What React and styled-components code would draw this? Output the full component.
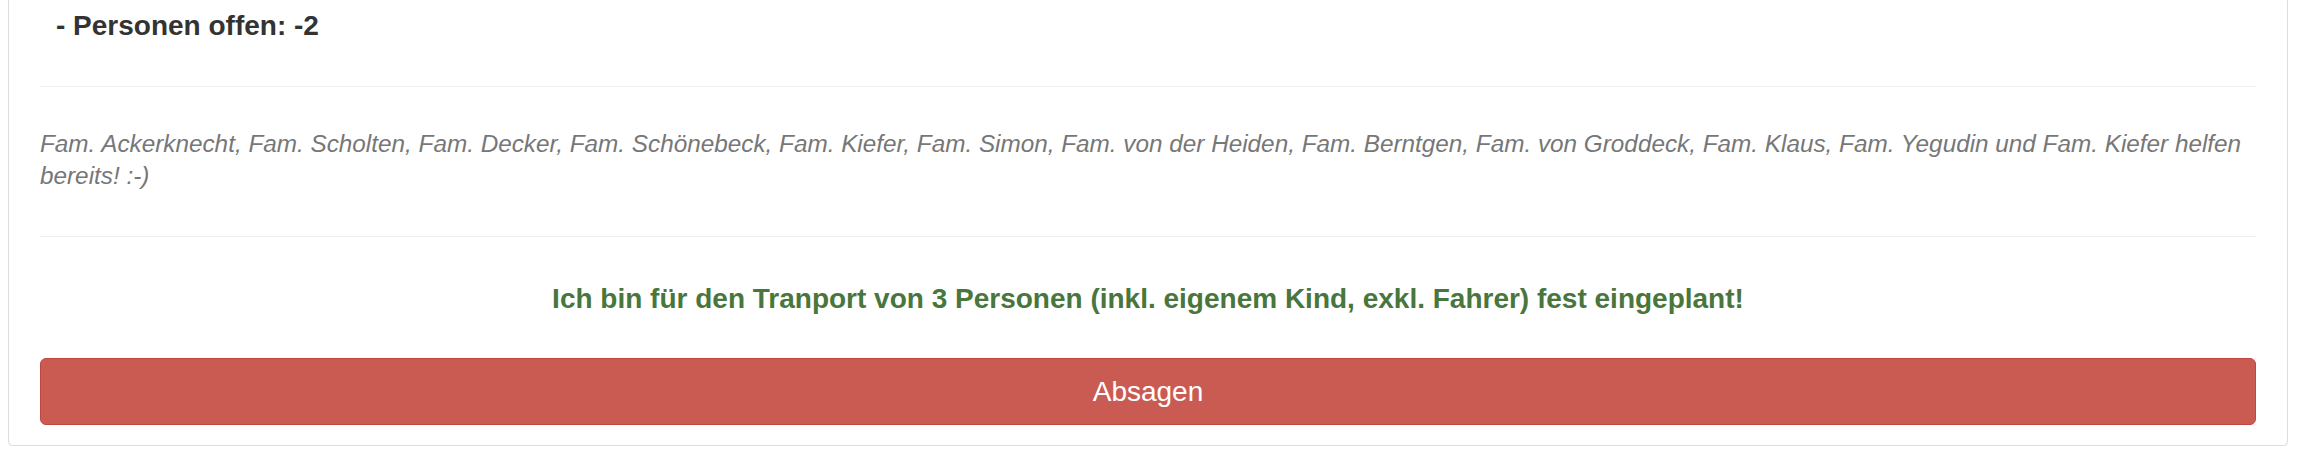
import React from 'react'
import styled, { createGlobalStyle } from 'styled-components'

const GlobalStyle = createGlobalStyle`
  body {
    margin: 0;
    background: #fff;
    font-family: "Liberation Sans", Arial, Helvetica, sans-serif;
    color: #333;
  }
`

const Page = styled.div`
  padding: 0 10px 0 8px;
`

const Panel = styled.section`
  border: 1px solid #ddd;
  border-top: 0;
  border-radius: 0 0 5px 5px;
  box-shadow: 0 1px 1px rgba(0, 0, 0, 0.05);
  background: #fff;
`

const PanelBody = styled.div`
  display: flex;
  flex-direction: column;
  padding: 10px 31px 20px 31px;
`

const OpenCount = styled.h3`
  margin: 0;
  padding-left: 16px;
  font-size: 28px;
  line-height: 31px;
  font-weight: bold;
  color: #333;
`

const Divider = styled.hr`
  border: 0;
  border-top: 1px solid #eee;
  height: 0;
  margin: ${p => p.$top}px 0 0;
`

const Helpers = styled.p`
  margin: 41px 0 0;
  font-size: 24.3px;
  line-height: 32px;
  font-style: italic;
  color: #777;
`

const Confirmed = styled.p`
  margin: 46px 0 0;
  font-size: 28px;
  line-height: 31px;
  font-weight: bold;
  text-align: center;
  color: #48763c;
`

const CancelButton = styled.button`
  margin-top: 44px;
  height: 67px;
  display: flex;
  align-items: center;
  justify-content: center;
  border: 1px solid #c2463e;
  border-radius: 6px;
  background: #ca5b53;
  color: #fff;
  font-family: inherit;
  font-size: 28px;
  cursor: pointer;
`

const families = [
  'Ackerknecht',
  'Scholten',
  'Decker',
  'Schönebeck',
  'Kiefer',
  'Simon',
  'von der Heiden',
  'Berntgen',
  'von Groddeck',
  'Klaus',
  'Yegudin',
]

export default function App() {
  const list = families.map(f => `Fam. ${f}`).join(', ')
  return (
    <>
      <GlobalStyle />
      <Page>
        <Panel>
          <PanelBody>
            <OpenCount>- Personen offen: -2</OpenCount>
            <Divider $top={45} />
            <Helpers>{list} und Fam. Kiefer helfen bereits! :-)</Helpers>
            <Divider $top={44} />
            <Confirmed>
              Ich bin für den Tranport von 3 Personen (inkl. eigenem Kind, exkl. Fahrer) fest eingeplant!
            </Confirmed>
            <CancelButton>Absagen</CancelButton>
          </PanelBody>
        </Panel>
      </Page>
    </>
  )
}
